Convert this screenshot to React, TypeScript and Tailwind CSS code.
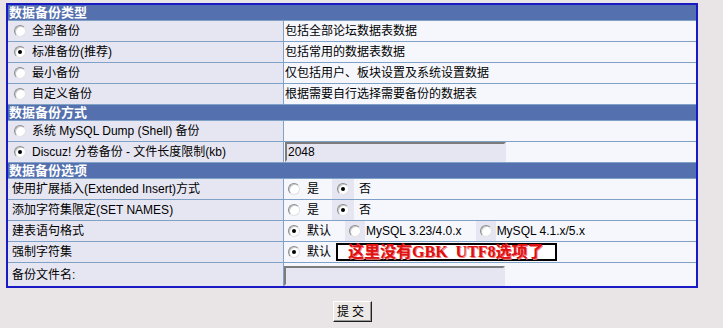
import React from "react";

function Radio({ checked }: { checked?: boolean }) {
  return (
    <span className="inline-flex h-[12px] w-[12px] shrink-0 items-center justify-center rounded-full border border-[#8c8c8c] border-b-[#e2e2e2] border-r-[#e2e2e2] bg-white shadow-[inset_1px_1px_0_#c8c8c8]">
      {checked && <span className="h-[4px] w-[4px] rounded-full bg-black" />}
    </span>
  );
}

function Header({ title }: { title: string }) {
  return (
    <div className="col-span-2 flex h-[15px] items-center bg-[#5470ae] pl-[1px] text-[13px] font-bold leading-none text-white">
      {title}
    </div>
  );
}

function TypeRow({ label, desc, checked }: { label: string; desc?: React.ReactNode; checked?: boolean }) {
  return (
    <>
      <div className="flex h-[20px] items-center gap-[6px] bg-[#e6e6f2] pl-[6px]">
        <Radio checked={checked} />
        <span>{label}</span>
      </div>
      <div className="flex h-[20px] items-center bg-[#f5f7fd] pl-[1px]">{desc}</div>
    </>
  );
}

function InsetInput({ value }: { value?: string }) {
  return (
    <div className="flex h-[20px] w-[221px] items-center border-2 border-b-[#e6e6f2] border-l-[#7c7c7c] border-r-[#e6e6f2] border-t-[#7c7c7c] bg-[#e6e6f2] pl-[1px]">
      {value}
    </div>
  );
}

function OptRow({ label, children, tall }: { label: string; children: React.ReactNode; tall?: boolean }) {
  return (
    <>
      <div className={`flex items-center bg-[#e6e6f2] pl-[4px] ${tall ? "h-[23px]" : "h-[20px]"}`}>{label}</div>
      <div className={`flex items-stretch bg-[#f5f7fd] ${tall ? "h-[23px]" : "h-[20px]"}`}>{children}</div>
    </>
  );
}

function YesNo() {
  return (
    <>
      <div className="flex items-center pl-[4px]">
        <Radio />
        <span className="ml-[7px]">是</span>
      </div>
      <div className="ml-[13px] flex items-center bg-[#e6e6f2] px-[5px]">
        <Radio checked />
      </div>
      <div className="ml-[5px] flex items-center">否</div>
    </>
  );
}

export default function App() {
  return (
    <div className="h-[328px] w-[723px] bg-[#e9e5e7] pl-[6px] pt-[3px] font-['Liberation_Sans','Noto_Sans_CJK_SC',sans-serif] text-[12px] leading-none text-black">
      <div className="w-[692px] border-2 border-[#1a1ac4]">
        <div className="grid grid-cols-[275px_1fr] gap-px bg-[#7fa2c6]">
          <Header title="数据备份类型" />
          <TypeRow label="全部备份" desc="包括全部论坛数据表数据" />
          <TypeRow label="标准备份(推荐)" desc="包括常用的数据表数据" checked />
          <TypeRow label="最小备份" desc="仅包括用户、板块设置及系统设置数据" />
          <TypeRow label="自定义备份" desc="根据需要自行选择需要备份的数据表" />

          <Header title="数据备份方式" />
          <TypeRow label="系统 MySQL Dump (Shell) 备份" />
          <TypeRow label="Discuz! 分卷备份 - 文件长度限制(kb)" checked desc={<InsetInput value="2048" />} />

          <Header title="数据备份选项" />
          <OptRow label="使用扩展插入(Extended Insert)方式">
            <YesNo />
          </OptRow>
          <OptRow label="添加字符集限定(SET NAMES)">
            <YesNo />
          </OptRow>
          <OptRow label="建表语句格式">
            <div className="flex items-center pl-[4px]">
              <Radio checked />
              <span className="ml-[7px]">默认</span>
            </div>
            <div className="ml-[14px] flex items-center bg-[#e6e6f2] px-[4px]">
              <Radio />
            </div>
            <div className="ml-[1px] flex items-center">MySQL 3.23/4.0.x</div>
            <div className="ml-[14px] flex items-center bg-[#e6e6f2] px-[4px]">
              <Radio />
            </div>
            <div className="ml-[1px] flex items-center">MySQL 4.1.x/5.x</div>
          </OptRow>
          <OptRow label="强制字符集">
            <div className="flex items-center pl-[4px]">
              <Radio checked />
              <span className="ml-[7px]">默认</span>
            </div>
            <div className="my-[1px] ml-[5px] flex w-[221px] items-center border-2 border-black bg-white pl-[10px] font-['Liberation_Serif','Noto_Sans_CJK_SC',serif] text-[16px] font-bold text-[#e01010] [text-shadow:1px_1px_0_#f08080]">
              这里没有GBK&nbsp;&nbsp;UTF8选项了
            </div>
          </OptRow>
          <OptRow label="备份文件名:" tall>
            <div className="flex items-end">
              <InsetInput />
            </div>
          </OptRow>
        </div>
      </div>
      <div className="flex w-[692px] justify-center pt-[13px]">
        <button className="flex h-[21px] w-[39px] items-center justify-center border border-b-[#202020] border-l-white border-r-[#202020] border-t-white bg-[#ece9e6] text-[12px] tracking-[3px] shadow-[inset_-1px_-1px_0_#9a9a9a]">
          提交
        </button>
      </div>
    </div>
  );
}
